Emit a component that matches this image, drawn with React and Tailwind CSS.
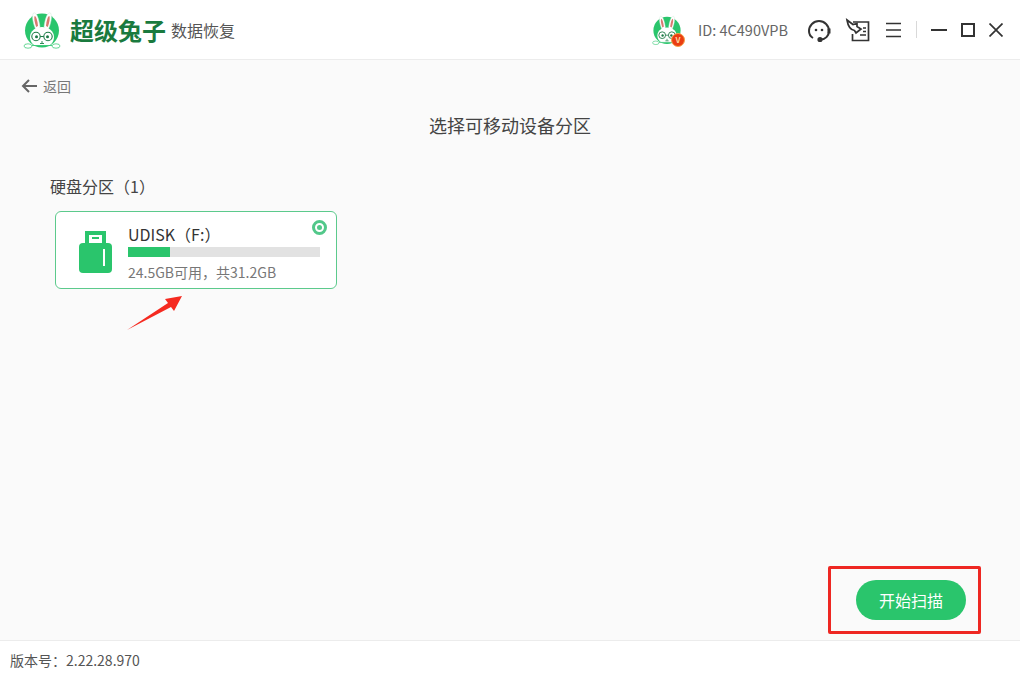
import React from 'react';

const cjk = { fontFamily: '"Noto Sans CJK SC", "Noto Sans", sans-serif' };

const Rabbit = ({ className }) => (
    <svg viewBox="0 0 40 40" className={className}>
        <circle cx="20" cy="20.5" r="17" fill="#2ac56c" />
        <path d="M14.5 21C11 14 9.5 6 11.5 3c3-1.500 5.500 6 6.500 14z" fill="#fff" stroke="#cfe9d8" strokeWidth="0.5" />
        <path d="M25.5 21C29 14 30.5 6 28.5 3c-3-1.500-5.500 6-6.500 14z" fill="#fff" stroke="#cfe9d8" strokeWidth="0.5" />
        <path d="M14.2 17C12.5 12 11.8 8 12.6 6c1.600 0 3 5 3.400 10z" fill="#d9796f" />
        <path d="M25.8 17C27.5 12 28.2 8 27.4 6c-1.600 0-3 5-3.400 10z" fill="#d9796f" />
        <path d="M8 27c0-6 5.500-10 12-10s12 4 12 10c0 5-3 7.500-5 8.500H13c-2-1-5-3.500-5-8.500z" fill="#fff" />
        <ellipse cx="6" cy="36" rx="4" ry="2.200" fill="#fff" stroke="#2ac56c" strokeWidth="0.700" />
        <ellipse cx="34" cy="36" rx="4" ry="2.200" fill="#fff" stroke="#2ac56c" strokeWidth="0.700" />
        <path d="M10 35.500h20" stroke="#2ac56c" strokeWidth="0.800" />
        <circle cx="14" cy="26.500" r="4.200" fill="#fff" stroke="#1c7a45" strokeWidth="1.100" />
        <circle cx="26" cy="26.500" r="4.200" fill="#fff" stroke="#1c7a45" strokeWidth="1.100" />
        <path d="M18.200 26.500h3.600" stroke="#1c7a45" strokeWidth="1" />
        <circle cx="14.500" cy="26.800" r="1.500" fill="#1c7a45" />
        <circle cx="25.500" cy="26.800" r="1.500" fill="#1c7a45" />
        <path d="M20 31v2M18 33.500h4" stroke="#1c7a45" strokeWidth="0.900" />
    </svg>
);

const HeaderIcons = () => (
    <div className="flex items-center text-[#333]">
        {/* Support */}
        <svg viewBox="0 0 26 26" className="w-[26px] h-[26px] ml-[18px]" fill="none" stroke="#333" strokeWidth="2">
            <path d="M3 14a10 10 0 0 1 20 0c0 5-4 8.500-8 8.500" />
            <path d="M3 14c0 3 1.500 5.500 4 7" />
            <path d="M23 11.500v5" strokeWidth="3" />
            <circle cx="14" cy="22.500" r="1.600" fill="#333" />
            <circle cx="10" cy="13" r="1.300" fill="#333" stroke="none" />
            <circle cx="16" cy="13" r="1.300" fill="#333" stroke="none" />
        </svg>
        {/* Feedback */}
        <svg viewBox="0 0 26 26" className="w-[26px] h-[26px] ml-[13px]" fill="none" stroke="#333" strokeWidth="1.700">
            <path d="M8 5h15.500v18.500H7.500V17" />
            <path d="M2 3l6 4.500 4-1v3l4 2.500-5 4-1.500-2.500C6 13 3 9 2 3z" fill="#fff" />
            <path d="M18 11h3M18 14.500h3M15 18h6" strokeWidth="1.400" />
        </svg>
        {/* Menu */}
        <svg viewBox="0 0 18 16" className="w-[18px] h-4 ml-[13px]" stroke="#333" strokeWidth="1.700">
            <path d="M2 1.500h15M2 8h15M2 14.500h15" />
        </svg>
        <div className="w-px h-[17px] bg-[#d9d9d9] ml-[14px]"></div>
        {/* Window controls */}
        <svg viewBox="0 0 16 16" className="w-4 h-4 ml-[14px]" stroke="#333" strokeWidth="2">
            <path d="M0 8h16" />
        </svg>
        <svg viewBox="0 0 14 14" className="w-[14px] h-[14px] ml-[14px]" fill="none" stroke="#333" strokeWidth="2">
            <rect x="1" y="1" width="12" height="12" />
        </svg>
        <svg viewBox="0 0 14 14" className="w-[14px] h-[14px] ml-[14px]" fill="none" stroke="#333" strokeWidth="1.700">
            <path d="M0.500 0.500l13 13M13.500 0.500l-13 13" />
        </svg>
    </div>
);

const DiskCard = () => (
    <div className="relative ml-[55px] mt-[14px] w-[282px] h-[78px] rounded-md border border-[#5cca8c] bg-white flex">
        <svg viewBox="0 0 33 42" className="w-[33px] h-[42px] ml-[23px] mt-[19px] shrink-0">
            <rect x="6" y="0" width="21" height="13" fill="#2ac56c" />
            <rect x="10" y="4" width="13" height="8" fill="#fff" />
            <rect x="13" y="6" width="7" height="2" fill="#2ac56c" />
            <rect x="0" y="12" width="33" height="30" rx="4" fill="#2ac56c" />
            <rect x="24" y="18" width="2" height="17" fill="#fff" />
        </svg>
        <div className="ml-[16px] w-[192px] flex flex-col">
            <div className="mt-[10px] text-[16px] leading-[24px] text-[#333]">UDISK（F:）</div>
            <div className="mt-px h-[10px] bg-[#e2e2e2]">
                <div className="h-full bg-[#2ac56c]" style={{ width: '22%' }}></div>
            </div>
            <div className="mt-[6px] text-[14px] leading-[18px] text-[#777]">24.5GB可用，共31.2GB</div>
        </div>
        <div className="absolute top-[8px] right-[9px] w-[15px] h-[15px] rounded-full border-[3px] border-[#52c88a] flex items-center justify-center">
            <div className="w-[5px] h-[5px] rounded-full bg-[#52c88a]"></div>
        </div>
        {/* Annotation arrow */}
        <svg viewBox="0 0 60 40" className="absolute left-[71px] top-[82px] w-[60px] h-[40px]">
            <path d="M0 36L41 9l-3-4 17-3-8 15-3-4z" fill="#f52a20" />
        </svg>
    </div>
);

const App = () => {
    return (
        <div className="w-[1020px] h-[680px] flex flex-col bg-white overflow-hidden" style={cjk}>
            {/* Header */}
            <div className="h-[60px] shrink-0 flex items-center justify-between border-b border-[#ececec] pl-[22px] pr-[17px]">
                <div className="flex items-center">
                    <Rabbit className="w-[40px] h-[40px]" />
                    <span className="ml-[8px] text-[24px] font-bold leading-none text-[#1a7a3e]">超级兔子</span>
                    <span className="ml-[5px] text-[16px] leading-none text-[#555]">数据恢复</span>
                </div>
                <div className="flex items-center">
                    <div className="relative w-[32px] h-[32px]">
                        <Rabbit className="w-[32px] h-[32px]" />
                        <div className="absolute right-[-2px] bottom-[-1px] w-[14px] h-[14px] rounded-full bg-[#ea3d12] border border-[#f7a24a] flex items-center justify-center text-[8px] font-bold leading-none text-[#ffd9a0]">V</div>
                    </div>
                    <span className="ml-[15px] text-[14.5px] text-[#666]">ID: 4C490VPB</span>
                    <HeaderIcons />
                </div>
            </div>

            {/* Main */}
            <div className="flex-1 flex flex-col bg-[#fafafa]">
                <div className="flex items-center h-[20px] mt-[16px] ml-[21px]">
                    <svg viewBox="0 0 16 14" className="w-4 h-[14px]" fill="none" stroke="#666" strokeWidth="2">
                        <path d="M16 7H2M8 1L2 7l6 6" />
                    </svg>
                    <span className="ml-[6px] text-[14px] text-[#777]">返回</span>
                </div>
                <div className="mt-[17px] text-center text-[18px] leading-[24px] text-[#444]">选择可移动设备分区</div>
                <div className="mt-[38px] ml-[50px] text-[16px] leading-[22px] text-[#444]">硬盘分区（1）</div>
                <DiskCard />
                <div className="mt-auto mb-[20px] mr-[54px] flex justify-end">
                    <div className="relative">
                        <button className="w-[110px] h-[40px] rounded-full bg-[#2ac56c] text-[16px] text-white">开始扫描</button>
                        {/* Annotation frame */}
                        <div className="absolute left-[-28px] top-[-14px] w-[153px] h-[68px] rounded-[2px] border-[3px] border-[#ee2722]"></div>
                    </div>
                </div>
            </div>

            {/* Footer */}
            <div className="h-[40px] shrink-0 flex items-center border-t border-[#ececec] pl-[10px] text-[14px] text-[#555]">版本号：2.22.28.970</div>
        </div>
    );
};

export default App;
